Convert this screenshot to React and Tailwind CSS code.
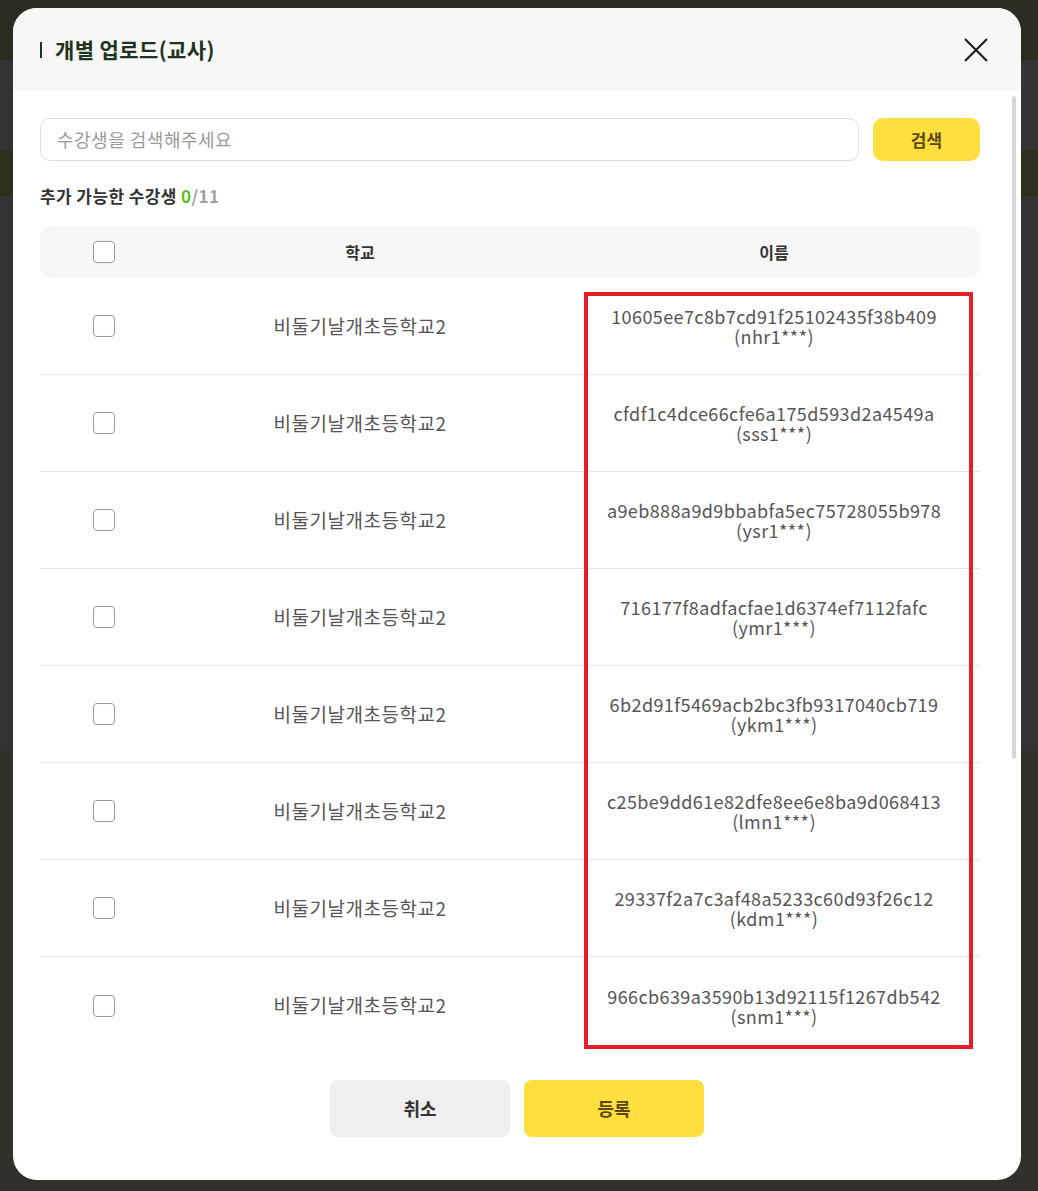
import React from 'react'

const rows = [
  ['10605ee7c8b7cd91f25102435f38b409', 'nhr1***'],
  ['cfdf1c4dce66cfe6a175d593d2a4549a', 'sss1***'],
  ['a9eb888a9d9bbabfa5ec75728055b978', 'ysr1***'],
  ['716177f8adfacfae1d6374ef7112fafc', 'ymr1***'],
  ['6b2d91f5469acb2bc3fb9317040cb719', 'ykm1***'],
  ['c25be9dd61e82dfe8ee6e8ba9d068413', 'lmn1***'],
  ['29337f2a7c3af48a5233c60d93f26c12', 'kdm1***'],
  ['966cb639a3590b13d92115f1267db542', 'snm1***'],
]

const Box = () => (
  <span className="block w-[22px] h-[22px] rounded-[4px] border border-[#9a9a9a] bg-white" />
)

const App = () => {
  return (
    <div
      className="relative w-[1038px] h-[1191px] overflow-hidden bg-[#30312a]"
      style={{ fontFamily: '"Noto Sans CJK KR", "Noto Sans", sans-serif' }}
    >
      {/* dimmed page behind the modal */}
      <div className="flex flex-col">
        <div className="h-[60px] bg-[#2a2d21]" />
        <div className="h-[90px] bg-[#333333]" />
        <div className="h-[46px] bg-[#2f2f20]" />
        <div className="h-[554px] bg-[#333333]" />
      </div>

      {/* modal */}
      <div className="absolute left-[13px] top-[8px] w-[1008px] h-[1172px] rounded-[24px] bg-white overflow-hidden flex flex-col">
        <div className="h-[83px] shrink-0 bg-[#f7f7f7] flex items-center justify-between pl-[27px] pr-[33px]">
          <div className="flex items-center gap-[13px]">
            <span className="block w-[2px] h-[16px] bg-[#1f3320]" />
            <h2 className="text-[21px] tracking-[0.4px] font-bold text-[#1f3320] leading-none">개별 업로드(교사)</h2>
          </div>
          <svg width="24" height="24" viewBox="0 0 24 24" fill="none" stroke="#1a1a1a" strokeWidth="2">
            <path d="M1 1L23 23M23 1L1 23" />
          </svg>
        </div>

        <div className="pl-[27px] pr-[41px] pt-[27px] flex flex-col">
          <div className="flex gap-[14px] h-[43px]">
            <div className="flex-1 rounded-[10px] border border-[#dcdcdc] flex items-center px-[16px] text-[18px] tracking-[0.5px] text-[#9a9a9a]">
              수강생을 검색해주세요
            </div>
            <button className="w-[107px] rounded-[10px] bg-[#ffdf3d] text-[17px] font-bold text-[#5a4810]">
              검색
            </button>
          </div>

          <p className="mt-[24px] text-[17px] tracking-[0.4px] leading-[22px] font-bold text-[#333333]">
            추가 가능한 수강생 <span className="text-[#5cbf22]">0</span>
            <span className="text-[#a0a0a0]">/11</span>
          </p>

          <div className="mt-[19px] h-[52px] rounded-[12px] bg-[#f7f7f7] grid grid-cols-[128px_384px_1fr] items-center text-[16px] font-bold text-[#333333]">
            <div className="flex justify-center"><Box /></div>
            <div className="text-center">학교</div>
            <div className="text-center pl-[16px]">이름</div>
          </div>

          <div className="flex flex-col">
            {rows.map(([hash, id], i) => (
              <div
                key={hash}
                className={`h-[97px] grid grid-cols-[128px_384px_1fr] items-center ${i < rows.length - 1 ? 'border-b border-[#e6e6e6]' : ''}`}
              >
                <div className="flex justify-center"><Box /></div>
                <div className="text-center text-[19px] tracking-[0.5px] text-[#555555]">비둘기날개초등학교2</div>
                <div className="text-center pl-[16px] text-[18px] tracking-[0.4px] leading-[20px] text-[#555555]">
                  <div>{hash}</div>
                  <div>({id})</div>
                </div>
              </div>
            ))}
          </div>

          <div className="mt-[26px] flex justify-center gap-[14px] pl-[14px]">
            <button className="w-[180px] h-[57px] rounded-[8px] bg-[#efefef] text-[18px] font-bold text-[#333333]">
              취소
            </button>
            <button className="w-[180px] h-[57px] rounded-[8px] bg-[#ffdf3d] text-[18px] font-bold text-[#5a4810]">
              등록
            </button>
          </div>
        </div>

        {/* scroll thumb */}
        <span className="absolute left-[999px] top-[88px] w-[4px] h-[663px] rounded-full bg-[#d6d6d6]" />

        {/* highlight annotation */}
        <span className="absolute left-[571px] top-[284px] w-[389px] h-[757px] border-[4px] border-[#e61e28]" />
      </div>
    </div>
  )
}

export default App
